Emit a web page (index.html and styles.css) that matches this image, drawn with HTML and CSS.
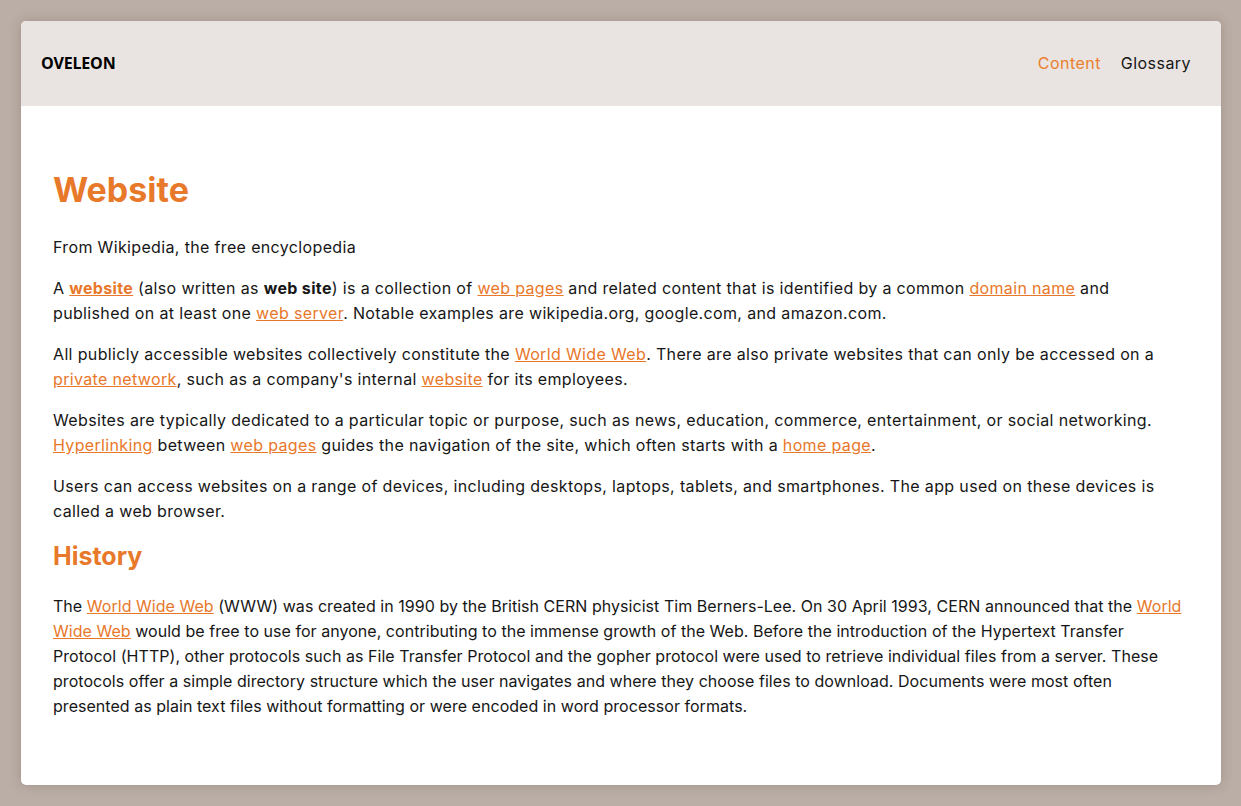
FILE: index.html
```html
<!DOCTYPE html>
<html lang="en">
<head>
<meta charset="utf-8">
<title>Website - Oveleon</title>
<link rel="stylesheet" href="styles.css">
</head>
<body>
<div class="card">
  <header class="header">
    <div class="logo">OVELEON</div>
    <nav class="nav">
      <a class="nav-link active" href="#">Content</a>
      <a class="nav-link" href="#">Glossary</a>
    </nav>
  </header>
  <main class="main">
    <h1 class="title">Website</h1>
    <p>From Wikipedia, the free encyclopedia</p>
    <p>A <a class="strong-link" href="#">website</a> (also written as <b>web site</b>) is a collection of <a href="#">web pages</a> and related content that is identified by a common <a href="#">domain name</a> and published on at least one <a href="#">web server</a>. Notable examples are wikipedia.org, google.com, and amazon.com.</p>
    <p>All publicly accessible websites collectively constitute the <a href="#">World Wide Web</a>. There are also private websites that can only be accessed on a <a href="#">private network</a>, such as a company's internal <a href="#">website</a> for its employees.</p>
    <p>Websites are typically dedicated to a particular topic or purpose, such as news, education, commerce, entertainment, or social networking. <a href="#">Hyperlinking</a> between <a href="#">web pages</a> guides the navigation of the site, which often starts with a <a href="#">home page</a>.</p>
    <p>Users can access websites on a range of devices, including desktops, laptops, tablets, and smartphones. The app used on these devices is called a web browser.</p>
    <h2 class="subtitle">History</h2>
    <p class="history-text">The <a href="#">World Wide Web</a> (WWW) was created in 1990 by the British CERN physicist Tim Berners-Lee. On 30 April 1993, CERN announced that the <a href="#">World Wide Web</a> would be free to use for anyone, contributing to the immense growth of the Web. Before the introduction of the Hypertext Transfer Protocol (HTTP), other protocols such as File Transfer Protocol and the gopher protocol were used to retrieve individual files from a server. These protocols offer a simple directory structure which the user navigates and where they choose files to download. Documents were most often presented as plain text files without formatting or were encoded in word processor formats.</p>
  </main>
</div>
</body>
</html>
```
FILE: styles.css
```css
html, body {
  margin: 0;
  padding: 0;
}
body {
  background: #bbaea6;
  font-family: Inter, "Noto Sans", sans-serif;
  font-size: 16px;
  color: #161616;
  padding: 21px 20px 20px 21px;
}
.card {
  background: #ffffff;
  border-radius: 5px;
  overflow: hidden;
  box-shadow: 0 0 12px rgba(80, 60, 50, 0.25);
}
.header {
  height: 85px;
  box-sizing: border-box;
  background: #e9e4e1;
  display: flex;
  align-items: center;
  justify-content: space-between;
  padding: 0 30px 2px 20px;
}
.logo {
  font-family: "Open Sans", sans-serif;
  font-weight: 700;
  font-size: 16px;
  letter-spacing: -0.2px;
  color: #000;
}
.nav {
  display: flex;
  gap: 20px;
}
.nav-link {
  color: #161616;
  text-decoration: none;
  letter-spacing: 0.45px;
}
.nav-link.active {
  color: #ea7f2e;
}
.main {
  padding: 62px 32px 50px;
}
.main p {
  margin: 0 0 16px;
  line-height: 25px;
  letter-spacing: 0.35px;
}
.main p.history-text {
  letter-spacing: 0.04px;
}
.main a {
  color: #e8772a;
}
.main a.strong-link {
  font-weight: 700;
}
.main b {
  font-weight: 700;
}
.title {
  margin: 0 0 23px;
  color: #e8792a;
  font-size: 34px;
  font-weight: 700;
  line-height: 44px;
  letter-spacing: 0;
}
.subtitle {
  margin: 4px 0 22px;
  color: #e8792a;
  font-size: 25px;
  font-weight: 700;
  line-height: 32px;
  letter-spacing: 0;
}
```
